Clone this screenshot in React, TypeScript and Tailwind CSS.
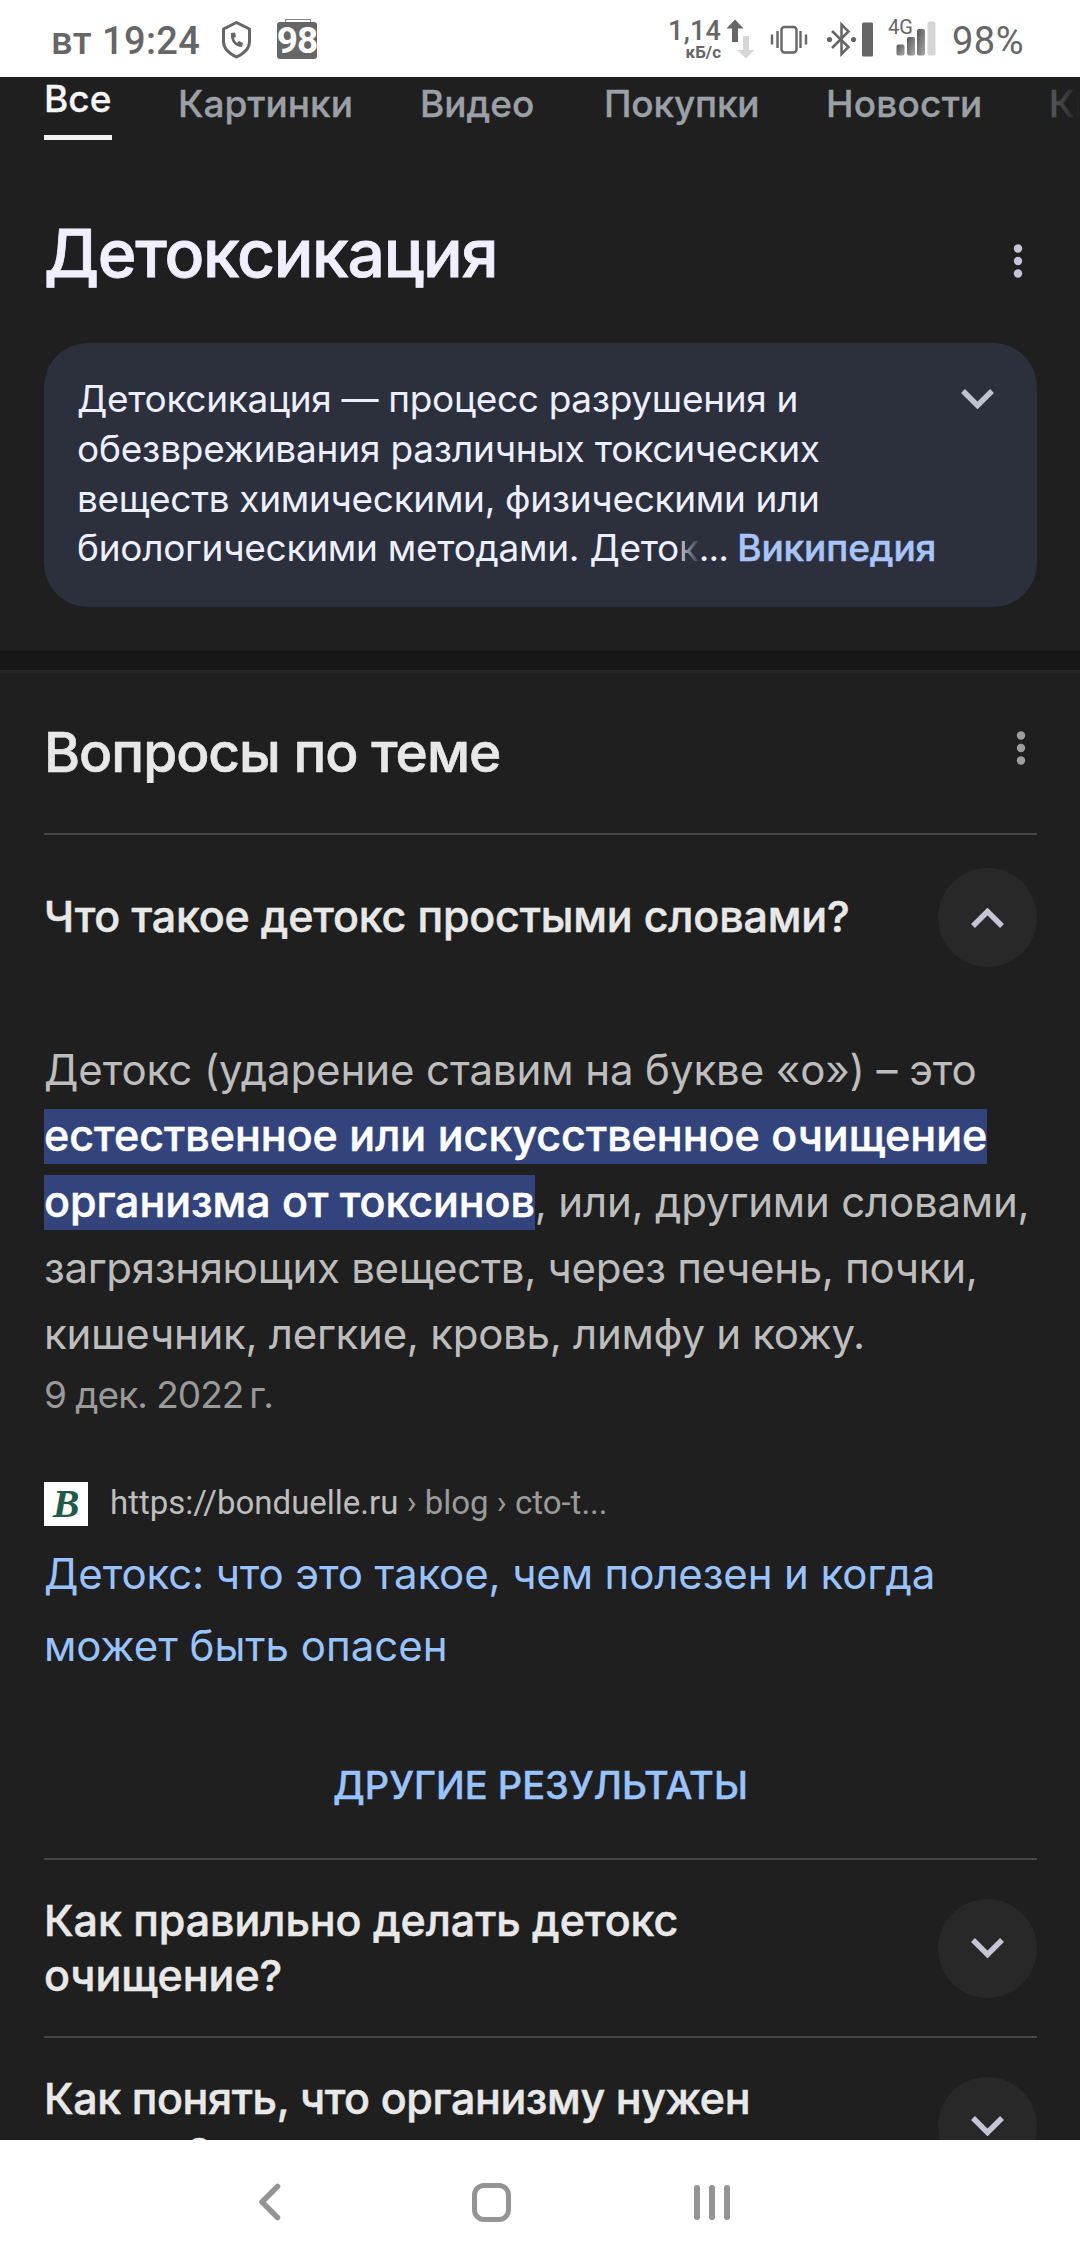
import React from 'react';

interface Tab {
  label: string;
  style: string;
}

interface QuestionProps {
  first: string;
  second: string;
  tracking: string;
}

const tabs: Tab[] = [
  { label: 'Картинки', style: 'w-[176px]' },
  { label: 'Видео', style: 'w-[118px]' },
  { label: 'Покупки', style: 'w-[156px] tracking-[-0.2px]' },
  { label: 'Новости', style: 'w-[157px] tracking-[0.2px]' },
];

const StatusBar: React.FC = () => {
  return (
    <div className="flex h-[77px] shrink-0 items-center bg-white pl-[51px] font-['Roboto',sans-serif] font-medium text-[#666]">
      <div className="w-[170px] pt-1 text-[38px] leading-[48px] tracking-[0.4px] whitespace-nowrap">вт 19:24</div>

      {/* Защита вызовов */}
      <svg className="h-[40px] w-[31px]" viewBox="221 18 31 40" fill="none">
        <path d="M236.5 21.5 249.5 28v12.5c0 7-4.5 11.5-13 15.5-8.5-4-13-8.5-13-15.5V28Z" stroke="#666" strokeWidth="3" strokeLinejoin="round" />
        <path d="M231 32c-1 8 4 14 11 14l1-4-4-2-2 2c-1.500-1.500-2.500-3-3-5l2-1.500-1-4Z" fill="#666" />
      </svg>

      <div className="relative ml-[25px] mt-[3px] flex h-[37px] w-[40px] items-center justify-center rounded-[3px] bg-[#666] text-[37px] font-bold leading-none tracking-[-1px] text-white">
        <div className="absolute -top-[3px] left-[8px] h-[3px] w-[26px] border border-b-0 border-[#888]" />
        98
      </div>

      <div className="ml-[350px] flex h-[44px] w-[54px] flex-col items-end">
        <div className="text-[27px] leading-[28px] tracking-[0.2px]">1,14</div>
        <div className="text-[17px] font-bold leading-[14px]">кБ/с</div>
      </div>
      <svg className="ml-[5px] h-[40px] w-[30px]" viewBox="725 18 30 40">
        <path d="M734 18.5 742.5 27.5H737V41h-6V27.5h-5.500Z" fill="#666" />
        <path d="M745 57.5 736.5 49H742V35h6v14h5.500Z" fill="#d6d6d6" />
      </svg>

      {/* Вибрация */}
      <svg className="ml-[13px] h-[40px] w-[40px]" viewBox="768 18 40 40" fill="none" stroke="#666">
        <rect x="780.5" y="26" width="15" height="25.5" rx="3" strokeWidth="2.4" />
        <path d="M776.5 30v17M799.5 30v17" strokeWidth="2.4" />
        <path d="M771 33.5v10M805 33.5v10" strokeWidth="2.4" />
      </svg>

      <svg className="ml-[17px] h-[40px] w-[48px]" viewBox="825 18 48 40" fill="none">
        <path d="M831 30 847.5 46 840.5 53V23.5L847.5 30.5 831 47" stroke="#666" strokeWidth="2.5" />
        <circle cx="828.5" cy="38.5" r="2.6" fill="#666" />
        <circle cx="852.5" cy="38.5" r="2.6" fill="#666" />
        <rect x="861" y="21.5" width="11" height="34" rx="1.5" fill="#666" />
      </svg>

      <div className="relative ml-[14px] h-[40px] w-[48px]">
        <div className="absolute left-0 top-[-1px] text-[20px] font-normal leading-[18px]">4G</div>
        <svg className="h-[40px] w-[48px]" viewBox="887 18 48 40">
          <defs>
            <linearGradient id="signal" x1="0" y1="0" x2="1" y2="1">
              <stop offset="0" stopColor="#555" />
              <stop offset="1" stopColor="#a8a8a8" />
            </linearGradient>
          </defs>
          <rect x="895.5" y="43.5" width="8" height="11" rx="2" fill="url(#signal)" />
          <rect x="906" y="36" width="8" height="18.5" rx="2" fill="url(#signal)" />
          <rect x="916" y="28" width="8" height="26.5" rx="2" fill="url(#signal)" />
          <rect x="926.5" y="20.5" width="8" height="34" rx="2" fill="#d6d6d6" />
        </svg>
      </div>
      <div className="ml-[16px] pt-1 text-[38px] font-normal leading-[48px] tracking-[0.5px] whitespace-nowrap">98%</div>
    </div>
  );
};

const Kebab: React.FC<{ className: string }> = ({ className }) => (
  <svg className={`h-[34px] w-[10px] ${className}`} viewBox="0 0 10 34" fill="currentColor">
    <circle cx="5" cy="4.5" r="4.2" />
    <circle cx="5" cy="17" r="4.2" />
    <circle cx="5" cy="29.5" r="4.2" />
  </svg>
);

const Chevron: React.FC<{ className?: string }> = ({ className = '' }) => (
  <svg className={`h-[20px] w-[33px] ${className}`} viewBox="0 0 33 20" fill="none">
    <path d="M2 2 16.5 16.5 31 2" stroke="currentColor" strokeWidth="5.5" />
  </svg>
);

const ToggleCircle: React.FC<{ open?: boolean }> = ({ open }) => (
  <div className="flex size-[99px] shrink-0 items-center justify-center rounded-full bg-[#282828] text-[#c6c5d6]">
    <Chevron className={open ? 'rotate-180' : ''} />
  </div>
);

const Question: React.FC<QuestionProps> = ({ first, second, tracking }) => {
  return (
    <div className="flex h-[178px] shrink-0 items-center justify-between border-t-2 border-[#464646]">
      <div className={`text-[43px] font-medium leading-[55px] text-[#e8e8e8] whitespace-nowrap [-webkit-text-stroke:0.5px] ${tracking}`}>
        {first}
        <br />
        {second}
      </div>
      <ToggleCircle />
    </div>
  );
};

const NavBar: React.FC = () => (
  <div className="flex h-[124px] shrink-0 items-center bg-white">
    <svg className="ml-[256px] h-[44px] w-[28px]" viewBox="0 0 28 44" fill="none">
      <path d="M21.5 6.5 6 22 21.5 37.5" stroke="#949494" strokeWidth="5.5" strokeLinecap="round" strokeLinejoin="round" />
    </svg>
    <div className="ml-[188px] size-[39px] rounded-[12px] border-[5.5px] border-[#949494]" />
    <div className="ml-[183px] flex gap-[9px]">
      <div className="h-[35px] w-[6px] rounded-full bg-[#949494]" />
      <div className="h-[35px] w-[6px] rounded-full bg-[#949494]" />
      <div className="h-[35px] w-[6px] rounded-full bg-[#949494]" />
    </div>
  </div>
);

const App: React.FC = () => {
  return (
    <div className="flex h-[2264px] w-[1080px] flex-col overflow-hidden bg-[#1f1f1f] font-['Inter','Roboto',sans-serif]">
      <StatusBar />

      <div className="flex h-[2063px] shrink-0 flex-col overflow-hidden">
        {/* Вкладки поиска */}
        <div className="relative flex h-[63px] shrink-0 gap-[66px] overflow-hidden pl-[44px] text-[37px] font-medium leading-[40px] text-[#9aa0a6] whitespace-nowrap [-webkit-text-stroke:0.3px]">
          <div className="w-[68px] shrink-0 border-b-[5px] border-[#f1f1f1] pt-[2px] text-[#f5f5f5]">Все</div>
          {tabs.map((tab) => (
            <div key={tab.label} className={`shrink-0 pt-[7px] ${tab.style}`}>
              {tab.label}
            </div>
          ))}
          <div className="shrink-0 pt-[7px]">Книги</div>
          <div className="absolute inset-y-0 right-0 w-[66px] bg-linear-to-r from-transparent to-[#1f1f1f]" />
        </div>

        {/* Панель знаний */}
        <div className="shrink-0 pb-[44px] pl-[44px] pr-[43px] pt-[73px]">
          <div className="flex items-center justify-between">
            <h1 className="text-[66px] font-medium leading-[80px] tracking-[-1.3px] text-[#f0eeff] [-webkit-text-stroke:0.8px]">Детоксикация</h1>
            <Kebab className="mr-[14px] mt-[15px] text-[#c6c5d4]" />
          </div>
          <div className="mt-[50px] flex h-[264px] justify-between rounded-[44px] bg-[#2c303d] pl-[33px] pr-[43px] pt-[31px]">
            <div className="text-[37px] leading-[49.8px] text-[#eceffd] whitespace-nowrap">
              <div className="tracking-[-0.32px]">Детоксикация — процесс разрушения и</div>
              <div className="tracking-[-0.2px]">обезвреживания различных токсических</div>
              <div className="tracking-[-0.32px]">веществ химическими, физическими или</div>
              <div className="tracking-[-0.27px]">
                биологическими методами. Дето
                <span className="bg-linear-to-r from-[#c8cad6] to-[#3c404d] bg-clip-text text-transparent">к</span>
                <span className="tracking-[-1px]">... </span>
                <span className="font-medium tracking-[-0.1px] text-[#a8c4f8] [-webkit-text-stroke:0.5px]">Википедия</span>
              </div>
            </div>
            <Chevron className="mt-[15px] text-[#c0c3cf]" />
          </div>
        </div>

        <div className="h-[22px] shrink-0 border-b-[3px] border-[#252525] bg-[#171717]" />

        {/* Вопросы по теме */}
        <div className="flex shrink-0 flex-col pl-[44px] pr-[43px] pt-[46px]">
          <div className="flex items-center justify-between">
            <h2 className="text-[55px] font-medium leading-[66px] tracking-[-1px] text-[#e8e8e8] [-webkit-text-stroke:0.6px]">Вопросы по теме</h2>
            <Kebab className="mr-[11px] -mt-[9px] text-[#9e9e9e]" />
          </div>

          <div className="mt-[48px] flex items-center justify-between border-t-2 border-[#444746] pt-[33px]">
            <div className="pb-[2px] text-[43px] font-medium leading-[55px] tracking-[-0.18px] text-[#e8e8e8] whitespace-nowrap [-webkit-text-stroke:0.5px]">
              Что такое детокс простыми словами?
            </div>
            <ToggleCircle open />
          </div>

          <div className="mt-[70px] text-[42px] leading-[66px] text-[#bdbdbd] whitespace-nowrap">
            <div className="tracking-[-0.1px]">Детокс (ударение ставим на букве «о») – это</div>
            <div className="h-[66px]">
              <span className="bg-[#33447d] pb-[3px] text-[43px] font-medium leading-none text-white [-webkit-text-stroke:0.5px]">
                естественное или искусственное очищение
              </span>
            </div>
            <div className="h-[66px] tracking-[-0.2px]">
              <span className="bg-[#33447d] pb-[3px] text-[43px] font-medium leading-none tracking-[-0.08px] text-white [-webkit-text-stroke:0.5px]">
                организма от токсинов
              </span>
              , или, другими словами,
            </div>
            <div className="tracking-[-0.32px]">загрязняющих веществ, через печень, почки,</div>
            <div className="tracking-[-0.28px]">кишечник, легкие, кровь, лимфу и кожу.</div>
          </div>
          <div className="mt-[3px] text-[37px] leading-[50px] tracking-[-1px] text-[#9a9a9a]">
            9 дек. 2022<span className="ml-[6px] tracking-normal">г.</span>
          </div>

          <div className="mt-[62px] flex h-[44px] font-['Roboto',sans-serif]">
            <div className="flex size-[44px] items-center justify-center bg-white">
              <span className="font-['Liberation_Serif',serif] text-[40px] font-bold italic leading-[44px] text-[#1f5a48]">B</span>
            </div>
            <div className="ml-[22px] text-[33px] leading-[41px] text-[#9a9a9a] whitespace-nowrap">
              <span className="text-[#bdbdbd]">https://bonduelle.ru</span> › blog › cto-t...
            </div>
          </div>

          <div className="mt-[12px] text-[42px] leading-[72px] text-[#99c3ff] whitespace-nowrap">
            <div className="tracking-[-0.12px]">Детокс: что это такое, чем полезен и когда</div>
            <div>может быть опасен</div>
          </div>

          <div className="mb-[48px] mt-[78px] text-center text-[38px] font-medium leading-[50px] text-[#99c3ff] [-webkit-text-stroke:0.4px]">
            ДРУГИЕ РЕЗУЛЬТАТЫ
          </div>

          <Question first="Как правильно делать детокс" second="очищение?" tracking="tracking-[-0.05px]" />
          <Question first="Как понять, что организму нужен" second="детокс?" tracking="tracking-[-0.4px]" />
        </div>
      </div>

      <NavBar />
    </div>
  );
};

export default App;
